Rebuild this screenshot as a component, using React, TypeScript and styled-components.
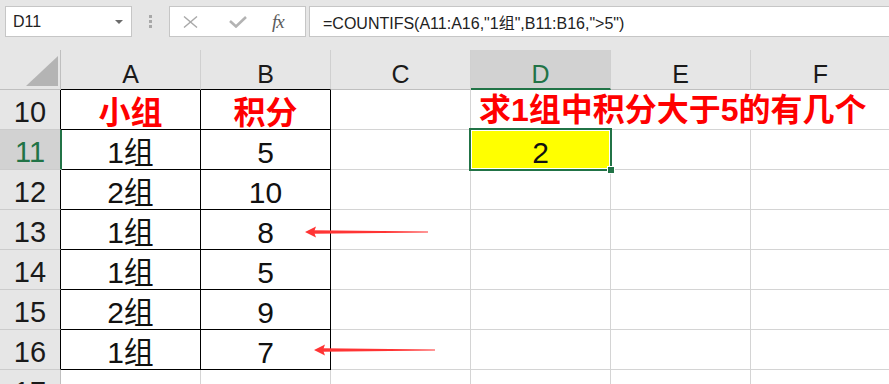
import React from "react";
import styled, { createGlobalStyle } from "styled-components";

const GREEN = "#217346";
const GRID = "#d4d4d4";
const BLACK = "#000";
const CHROME = "#e6e6e6";

const GlobalStyle = createGlobalStyle`
  html, body {
    margin: 0;
    padding: 0;
    background: ${CHROME};
    overflow: hidden;
  }
`;

const Window = styled.div`
  width: 889px;
  height: 384px;
  overflow: hidden;
  background: ${CHROME};
  font-family: "Liberation Sans", "Noto Sans CJK SC", sans-serif;
`;

/* ---------- formula bar ---------- */

const FormulaBar = styled.div`
  height: 50px;
  box-sizing: border-box;
  padding: 6px 0 0 5px;

  display: flex;
  align-items: flex-start;
`;

const NameBox = styled.div`
  width: 127px;
  height: 31px;
  box-sizing: border-box;
  padding: 0 8px 0 7px;

  display: flex;
  align-items: center;
  justify-content: space-between;

  background: #fff;
  border: 1px solid #c6c6c6;

  font-size: 16px;
  color: #222;
`;

const Caret = styled.span`
  width: 0;
  height: 0;

  border-left: 4px solid transparent;
  border-right: 4px solid transparent;
  border-top: 4px solid #6b6b6b;
`;

const Grip = styled.div`
  width: 37px;
  height: 31px;

  display: flex;
  flex-direction: column;
  align-items: center;
  justify-content: center;
  gap: 2px;
`;

const GripDot = styled.span`
  width: 3px;
  height: 3px;
  background: #a8a8a8;
`;

const FxBox = styled.div`
  width: 137px;
  height: 31px;
  box-sizing: border-box;
  padding-left: 13px;

  display: flex;
  align-items: center;

  background: #fff;
  border: 1px solid #c6c6c6;
`;

const IconSlot = styled.span<{ $w: number }>`
  width: ${({ $w }) => $w}px;
  display: flex;
  align-items: center;
`;

const FxLabel = styled.span`
  font-family: "Liberation Serif", serif;
  font-style: italic;
  font-size: 19px;
  color: #5c5c5c;
  letter-spacing: -1px;
`;

const FormulaInput = styled.div`
  flex: 1;
  height: 31px;
  box-sizing: border-box;
  margin-left: 3px;
  padding-left: 13px;

  display: flex;
  align-items: center;

  background: #fff;
  border: 1px solid #c6c6c6;
  border-right: none;

  font-size: 16px;
  color: #222;
  white-space: nowrap;
`;

/* ---------- sheet ---------- */

const Sheet = styled.div`
  position: relative;

  display: grid;
  grid-template-columns: 61px 140px 130px 140px 140px 140px 140px;
  grid-auto-rows: 40px;

  background: #fff;
`;

const Corner = styled.div`
  box-sizing: border-box;
  padding: 0 2px 3px 0;

  display: flex;
  align-items: flex-end;
  justify-content: flex-end;

  background: ${CHROME};
  border-right: 1px solid #bfbfbf;
  border-bottom: 1px solid #bfbfbf;
`;

const CornerMark = styled.div`
  width: 32px;
  height: 30px;
  background: #b4b4b4;
  clip-path: polygon(100% 0, 100% 100%, 0 100%);
`;

const ColHead = styled.div<{ $active?: boolean; $edge?: string }>`
  box-sizing: border-box;
  padding-top: 10px;

  display: flex;
  align-items: center;
  justify-content: center;

  background: ${({ $active }) => ($active ? "#d2d2d2" : CHROME)};
  border-right: 1px solid #d0d0d0;
  border-bottom: ${({ $active, $edge }) =>
    $active ? `2px solid ${GREEN}` : `1px solid ${$edge ?? "#bfbfbf"}`};

  font-size: 25px;
  line-height: 1;
  color: ${({ $active }) => ($active ? GREEN : "#1a1a1a")};
`;

const RowHead = styled.div<{ $active?: boolean; $edge?: string }>`
  position: relative;
  z-index: 1;
  box-sizing: border-box;
  padding-top: 6px;
  margin-right: ${({ $active }) => ($active ? "-1px" : "0")};

  display: flex;
  align-items: center;
  justify-content: center;

  background: ${({ $active }) => ($active ? "#d2d2d2" : CHROME)};
  border-bottom: 1px solid #cccccc;
  border-right: ${({ $active, $edge }) =>
    $active ? `2px solid ${GREEN}` : `1px solid ${$edge ?? "#bfbfbf"}`};

  font-size: 29px;
  line-height: 1;
  color: ${({ $active }) => ($active ? GREEN : "#1a1a1a")};
`;

const Cell = styled.div<{
  $right?: string;
  $bottom?: string;
  $span?: number;
  $title?: boolean;
}>`
  box-sizing: border-box;
  grid-column: ${({ $span }) => ($span ? `span ${$span}` : "auto")};
  padding: ${({ $title }) => ($title ? "0 0 0 8px" : "6px 0 0 0")};

  display: flex;
  align-items: center;
  justify-content: ${({ $title }) => ($title ? "flex-start" : "center")};

  border-right: 1px solid ${({ $right }) => $right ?? GRID};
  border-bottom: 1px solid ${({ $bottom }) => $bottom ?? GRID};

  font-size: 30px;
  line-height: 1;
  color: #111;
  white-space: nowrap;
`;

const Emphasis = styled.span`
  font-family: "Liberation Sans", "Noto Sans CJK SC", sans-serif;
  font-weight: 700;
  font-size: 32px;
  color: #ff0000;
`;

const ActiveCell = styled.div`
  position: relative;
  box-sizing: border-box;
  margin: -2px -1px -1px -2px;
  padding-top: 7px;

  display: flex;
  align-items: center;
  justify-content: center;

  background: #ffff00;
  border: 2px solid ${GREEN};
  box-shadow: inset 0 0 0 1px #fff;

  font-size: 30px;
  line-height: 1;
  color: #111;

  &::after {
    content: "";
    position: absolute;
    right: -5px;
    bottom: -5px;
    width: 6px;
    height: 6px;
    background: ${GREEN};
    border: 1px solid #fff;
  }
`;

const Arrow = styled.svg`
  position: absolute;
  z-index: 2;
  overflow: visible;
`;

type Row = { n: number; a: string; b: string; red?: boolean };

const ROWS: Row[] = [
  { n: 10, a: "小组", b: "积分", red: true },
  { n: 11, a: "1组", b: "5" },
  { n: 12, a: "2组", b: "10" },
  { n: 13, a: "1组", b: "8" },
  { n: 14, a: "1组", b: "5" },
  { n: 15, a: "2组", b: "9" },
  { n: 16, a: "1组", b: "7" },
  { n: 17, a: "", b: "" },
];

const COLUMNS = ["A", "B", "C", "D", "E", "F"];

function PointerArrow({ left, top, length }: { left: number; top: number; length: number }) {
  return (
    <Arrow style={{ left, top }} width={length} height={12} viewBox={`0 0 ${length} 12`}>
      <polygon points={`0,6 11,0.5 9,6 11,11.5`} fill="#ff3434" />
      <polygon points={`9,4.2 ${length},5.4 ${length},6.4 9,7.8`} fill="#ff3434" />
    </Arrow>
  );
}

function App() {
  return (
    <Window>
      <GlobalStyle />
      <FormulaBar>
        <NameBox>
          D11
          <Caret />
        </NameBox>
        <Grip>
          <GripDot />
          <GripDot />
          <GripDot />
        </Grip>
        <FxBox>
          <IconSlot $w={46}>
            <svg width="15" height="12" viewBox="0 0 15 12">
              <path d="M1 0.5 L14 11.5 M14 0.5 L1 11.5" stroke="#a9a9a9" strokeWidth="1.4" fill="none" />
            </svg>
          </IconSlot>
          <IconSlot $w={43}>
            <svg width="18" height="12" viewBox="0 0 18 12">
              <path d="M1 5 L7 10.5 L17 1" stroke="#b3b3b3" strokeWidth="2.6" fill="none" />
            </svg>
          </IconSlot>
          <FxLabel>fx</FxLabel>
        </FxBox>
        <FormulaInput>=COUNTIFS(A11:A16,"1组",B11:B16,"&gt;5")</FormulaInput>
      </FormulaBar>

      <Sheet>
        <Corner>
          <CornerMark />
        </Corner>
        {COLUMNS.map((c) => (
          <ColHead key={c} $active={c === "D"} $edge={c === "A" || c === "B" ? BLACK : undefined}>
            {c}
          </ColHead>
        ))}

        {ROWS.map((r) => {
          const boxed = r.n <= 16;
          const edge = boxed ? BLACK : GRID;
          return (
            <React.Fragment key={r.n}>
              <RowHead $active={r.n === 11} $edge={boxed ? BLACK : undefined}>
                {r.n}
              </RowHead>
              <Cell $right={edge} $bottom={edge}>
                {r.red ? <Emphasis>{r.a}</Emphasis> : r.a}
              </Cell>
              <Cell $right={edge} $bottom={edge}>
                {r.red ? <Emphasis>{r.b}</Emphasis> : r.b}
              </Cell>
              <Cell />
              {r.n === 10 ? (
                <Cell $span={3} $title>
                  <Emphasis>求1组中积分大于5的有几个</Emphasis>
                </Cell>
              ) : (
                <>
                  {r.n === 11 ? <ActiveCell>2</ActiveCell> : <Cell />}
                  <Cell />
                  <Cell />
                </>
              )}
            </React.Fragment>
          );
        })}

        <PointerArrow left={305} top={176} length={123} />
        <PointerArrow left={314} top={294} length={121} />
      </Sheet>
    </Window>
  );
}

export default App;
